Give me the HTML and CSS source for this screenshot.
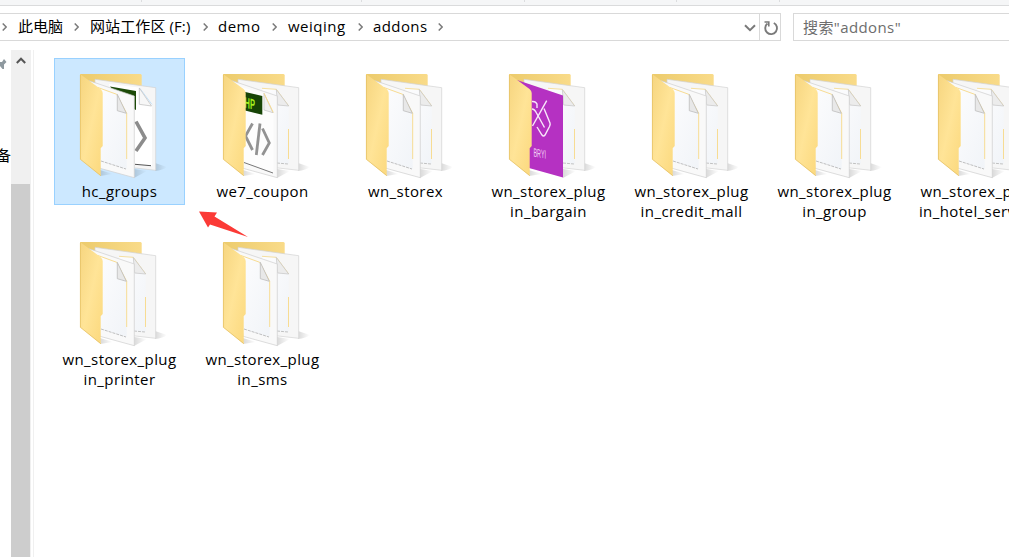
FILE: index.html
```html
<!DOCTYPE html>
<html lang="zh-CN">
<head>
    <meta charset="UTF-8">
    <title>addons</title>
    <link rel="stylesheet" href="styles.css">
</head>
<body>
    <svg class="sprite" width="0" height="0">
        <defs>
            <linearGradient id="gFlap" x1="0" y1="0" x2="1" y2="1">
                <stop offset="0" stop-color="#f6d57f"/>
                <stop offset="0.5" stop-color="#ffe497"/>
                <stop offset="1" stop-color="#fbd87c"/>
            </linearGradient>
            <linearGradient id="gBack" x1="0" y1="0" x2="1" y2="0">
                <stop offset="0" stop-color="#eccb6c"/>
                <stop offset="1" stop-color="#f9db89"/>
            </linearGradient>
            <linearGradient id="gSheet" x1="0" y1="0" x2="1" y2="1">
                <stop offset="0" stop-color="#fdfdfe"/>
                <stop offset="1" stop-color="#f1f4f8"/>
            </linearGradient>
            <linearGradient id="gShadow" x1="0" y1="0" x2="1" y2="0">
                <stop offset="0" stop-color="#000" stop-opacity="0.15"/>
                <stop offset="1" stop-color="#000" stop-opacity="0"/>
            </linearGradient>
        </defs>
        <symbol id="back" viewBox="0 0 97 114">
            <path d="M84 97 L96 101 Q92 104 84 105Z" fill="url(#gShadow)"/>
            <path d="M63 103 L76 105 L63 112Z" fill="url(#gShadow)"/>
            <path d="M29 104 L42 108 L29 110Z" fill="url(#gShadow)"/>
            <path d="M9 8 H69.500 Q70.700 8 70.700 9.500 V30 H9Z" fill="url(#gBack)"/>
            <path d="M24 13.300 L84.700 21.700 V104.300 L60 101.500 L24 90Z" fill="#f6f6f6" stroke="#d2d2d2" stroke-width="0.700"/>
        </symbol>
        <symbol id="backPage" viewBox="0 0 97 114">
            <path d="M48 22.300 L62.300 23.300 L74.700 40 V98 L60 97Z" fill="url(#gSheet)"/>
            <path d="M48 22.300 L62.300 23.300 L74.700 40" fill="none" stroke="#f5dfa0"/>
            <path d="M62.300 23.500 L63.700 39 L74.700 40Z" fill="#ececec" stroke="#c4c4c4" stroke-width="0.700"/>
            <path d="M74.500 63 V93" stroke="#f7dc93"/>
            <path d="M63 97 L74 98" stroke="#b5b5b5" stroke-width="0.800" stroke-dasharray="3 1"/>
        </symbol>
        <symbol id="front" viewBox="0 0 97 114">
            <path d="M18 14.700 L63.300 30 V111.700 L29 102.300Z" fill="#f9f9f9" stroke="#cfcfcf" stroke-width="0.700"/>
        </symbol>
        <symbol id="frontPage" viewBox="0 0 97 114">
            <path d="M24 20 L45.700 28.300 L55.700 47.300 V103 L29 95Z" fill="url(#gSheet)"/>
            <path d="M27 21.500 L45.700 28.300 L55.700 47.300 V93" fill="none" stroke="#f7dc93"/>
            <path d="M46.300 28.300 V44.700 L55.300 47.300Z" fill="#e8e8e8" stroke="#bdbdbd" stroke-width="0.800"/>
            <path d="M30 95 L55 103" stroke="#b0b0b0" stroke-width="0.800" stroke-dasharray="3 1"/>
        </symbol>
        <symbol id="flap" viewBox="0 0 97 114">
            <path d="M9 8 L29.500 23 Q31.700 25 31.700 27 V80 L29.700 82.300 V110 L9 93.300Z" fill="url(#gFlap)"/>
            <path d="M9.400 9 V93.300 L29.700 109.600" fill="none" stroke="#e3bd62" stroke-width="0.700"/>
        </symbol>
        <symbol id="folder" viewBox="0 0 97 114">
            <use href="#back"/><use href="#backPage"/><use href="#front"/><use href="#frontPage"/><use href="#flap"/>
        </symbol>
    </svg>

    <div class="ribbon">
        <i class="tick t1"></i><i class="tick t2"></i><i class="tick t3"></i><i class="tick t4"></i><i class="tick t5"></i>
    </div>

    <div class="toolbar">
        <div class="address">
            <div class="crumbs">
                <svg class="chev" viewBox="0 0 5 8"><path d="M0.700 0.500 L4.200 4 L0.700 7.500"/></svg>
                <span class="crumb c1">此电脑</span>
                <svg class="chev" viewBox="0 0 5 8"><path d="M0.700 0.500 L4.200 4 L0.700 7.500"/></svg>
                <span class="crumb c2">网站工作区 (F:)</span>
                <svg class="chev" viewBox="0 0 5 8"><path d="M0.700 0.500 L4.200 4 L0.700 7.500"/></svg>
                <span class="crumb c3">demo</span>
                <svg class="chev" viewBox="0 0 5 8"><path d="M0.700 0.500 L4.200 4 L0.700 7.500"/></svg>
                <span class="crumb c4">weiqing</span>
                <svg class="chev" viewBox="0 0 5 8"><path d="M0.700 0.500 L4.200 4 L0.700 7.500"/></svg>
                <span class="crumb c5">addons</span>
                <svg class="chev" viewBox="0 0 5 8"><path d="M0.700 0.500 L4.200 4 L0.700 7.500"/></svg>
            </div>
            <svg class="drop" viewBox="0 0 12 8"><path d="M1 1.200 L6 6.200 L11 1.200"/></svg>
            <div class="refresh">
                <svg viewBox="0 0 16 16" width="16" height="16">
                    <path d="M10.800 3 A5.900 5.900 0 1 1 4.500 3.600" fill="none" stroke="#7a7a7a" stroke-width="1.900"/>
                    <path d="M1.500 2 H5.800 V6.500" fill="none" stroke="#7a7a7a" stroke-width="1.600"/>
                </svg>
            </div>
        </div>
        <div class="search">搜索"addons"</div>
    </div>

    <div class="main">
        <div class="nav">
            <svg class="pin" viewBox="0 0 7 14"><path d="M0 4 L2 4 L4 1 L6.500 4 L4 6.500 L4 11 L2.500 11 L0 8Z" fill="#8e999f"/></svg>
            <div class="nav-text">备</div>
        </div>
        <div class="scrollbar">
            <svg class="up" viewBox="0 0 10 7"><path d="M0.800 6 L5 1.700 L9.200 6"/></svg>
            <div class="thumb"></div>
        </div>
        <div class="files">
            <div class="item selected">
                <svg class="icon" viewBox="0 0 97 114">
                    <use href="#back"/>
                    <path d="M38 18 L68 21.500 L81 39 V100 L60 98Z" fill="#fff"/>
                    <path d="M39 20.500 L65 25 V44 L52 38Z" fill="#1c4a08"/>
                    <path d="M69 22.500 L81 38.500" stroke="#c6e2f8"/>
                    <path d="M68.300 22 V38.300 L80.500 40Z" fill="#f7f7f7" stroke="#c4c4c4" stroke-width="0.800"/>
                    <path d="M65 55.500 L74 72 L65 85" fill="none" stroke="#8c8c8c" stroke-width="3.600"/>
                    <path d="M64 98.300 L80 99.700" stroke="#555"/>
                    <use href="#front"/><use href="#frontPage"/><use href="#flap"/>
                </svg>
                <div class="name">hc_groups</div>
            </div>
            <div class="item">
                <svg class="icon" viewBox="0 0 97 114">
                    <use href="#back"/><use href="#backPage"/><use href="#front"/>
                    <path d="M24 20 L50 27.500 L59.500 46 V107 L29 96Z" fill="#fdfdfd"/>
                    <path d="M27 25 L48.300 30 V48.700 L27 43.500Z" fill="#174406"/>
                    <text class="php" x="0" y="0" transform="matrix(0.500 0.120 0 1 30.500 41.500)">HP</text>
                    <path d="M50 27.300 V44 L59 46.700Z" fill="#f1f1f1" stroke="#c2c2c2" stroke-width="0.700"/>
                    <path d="M50 27.300 L59.300 46.500" stroke="#f7dc93"/>
                    <g fill="none" stroke="#929292" stroke-width="2.800">
                        <path d="M38.500 57.500 L31.500 70 L38.500 84"/>
                        <path d="M46 57.500 L42.300 89"/>
                        <path d="M48.500 62.500 L55.300 77 L48.500 89"/>
                    </g>
                    <path d="M30 96.500 L59 107" stroke="#777"/>
                    <use href="#flap"/>
                </svg>
                <div class="name">we7_coupon</div>
            </div>
            <div class="item">
                <svg class="icon" viewBox="0 0 97 114"><use href="#folder"/></svg>
                <div class="name">wn_storex</div>
            </div>
            <div class="item">
                <svg class="icon" viewBox="0 0 97 114">
                    <use href="#back"/><use href="#backPage"/>
                    <path d="M17 14 L63 29.500 V111.500 L29 102Z" fill="#b531c2"/>
                    <g fill="none" stroke="#f8e8fa" stroke-width="1.400">
                        <path d="M46.700 34.700 L32.500 60"/>
                        <path d="M32 35.500 Q35.500 35 37 38 V42"/>
                        <path d="M32 43 Q34.500 43 36.500 47 L44.500 61.500"/>
                        <path d="M44 42.500 L50 57 Q50.500 58.500 49.500 60.500 L45 69 Q43.500 71 42 69 L37 61"/>
                    </g>
                    <text class="brand" x="0" y="0" transform="matrix(0.450 0.080 0 1 33.500 90.500)">BRYI</text>
                    <use href="#flap"/>
                </svg>
                <div class="name">wn_storex_plug<br>in_bargain</div>
            </div>
            <div class="item">
                <svg class="icon" viewBox="0 0 97 114"><use href="#folder"/></svg>
                <div class="name">wn_storex_plug<br>in_credit_mall</div>
            </div>
            <div class="item">
                <svg class="icon" viewBox="0 0 97 114"><use href="#folder"/></svg>
                <div class="name">wn_storex_plug<br>in_group</div>
            </div>
            <div class="item">
                <svg class="icon" viewBox="0 0 97 114"><use href="#folder"/></svg>
                <div class="name">wn_storex_plug<br>in_hotel_service</div>
            </div>
            <div class="item">
                <svg class="icon" viewBox="0 0 97 114"><use href="#folder"/></svg>
                <div class="name">wn_storex_plug<br>in_printer</div>
            </div>
            <div class="item">
                <svg class="icon" viewBox="0 0 97 114"><use href="#folder"/></svg>
                <div class="name">wn_storex_plug<br>in_sms</div>
            </div>
        </div>
        <svg class="arrow" viewBox="0 0 50 28"><path d="M0 1.500 L18 2.500 L15.500 6.500 L49 27 L11 14.500 L9 17.500Z" fill="#fb3a36"/></svg>
    </div>
</body>
</html>
```
FILE: styles.css
```css
* {
    box-sizing: border-box;
}
body {
    margin: 0;
    width: 1009px;
    height: 557px;
    overflow: hidden;
    background: #fff;
    color: #000;
    font-family: "Open Sans", "Noto Sans CJK SC", sans-serif;
    font-size: 15px;
}
.sprite {
    position: absolute;
}
.ribbon {
    display: flex;
    height: 6px;
    background: #f5f6f7;
    border-bottom: 1px solid #dadbdc;
}
.tick {
    width: 1px;
    height: 2px;
    background: #dcdddf;
}
.t1 { margin-left: 141px; }
.t2 { margin-left: 219px; }
.t3 { margin-left: 162px; }
.t4 { margin-left: 151px; }
.t5 { margin-left: 102px; }
.toolbar {
    display: flex;
    gap: 12px;
    height: 35px;
    padding-top: 7px;
}
.address {
    display: flex;
    align-items: center;
    width: 781px;
    height: 28px;
    border: 1px solid #d9d9d9;
    border-left: none;
}
.crumbs {
    display: flex;
    align-items: center;
    gap: 11px;
    flex: 1;
    padding-left: 2px;
}
.crumb {
    height: 26px;
    line-height: 24px;
    white-space: nowrap;
}
.c1 { width: 45px; }
.c2 { width: 102px; letter-spacing: 0.1px; }
.c3 { width: 43px; margin-left: -1px; letter-spacing: 0.5px; }
.c4 { width: 59px; letter-spacing: 0.5px; }
.c5 { width: 54px; margin-left: -1px; letter-spacing: 0.4px; }
.chev {
    width: 5px;
    height: 8px;
    flex: none;
}
.chev path, .drop path, .up path {
    fill: none;
    stroke: #7a7a7a;
    stroke-width: 1.5;
}
.drop {
    width: 12px;
    height: 8px;
    margin: 2px 3px 0 0;
}
.drop path {
    stroke-width: 2;
}
.refresh {
    display: flex;
    align-items: center;
    justify-content: center;
    width: 21px;
    height: 26px;
    padding: 1px 0 0 2px;
    border-left: 1px solid #d9d9d9;
}
.search {
    flex: 1;
    height: 28px;
    padding-left: 9px;
    border: 1px solid #d9d9d9;
    border-right: none;
    line-height: 26px;
    letter-spacing: 0.4px;
    color: #6d6d6d;
}
.main {
    position: relative;
    display: flex;
    height: 516px;
}
.nav {
    flex: none;
    width: 11px;
    overflow: hidden;
    padding-top: 17px;
}
.pin {
    display: block;
    width: 7px;
    height: 14px;
}
.nav-text {
    width: 15px;
    margin: 73px 0 0 -4px;
    line-height: 20px;
}
.scrollbar {
    flex: none;
    width: 20px;
    margin-top: 9px;
    background: #f0f0f0;
    text-align: center;
    line-height: 0;
}
.up {
    width: 10px;
    height: 7px;
    margin-top: 7px;
}
.up path {
    stroke: #555;
    stroke-width: 2;
}
.thumb {
    width: 19px;
    height: 380px;
    margin-top: 120px;
    background: #cdcdcd;
}
.files {
    display: grid;
    grid-template-columns: repeat(7, 131px);
    grid-auto-rows: 168px;
    column-gap: 12px;
    flex: none;
    margin: 9px 0 0 2px;
    padding: 8px 0 0 20px;
    border-left: 1px solid #f0f0f0;
}
.item {
    height: 147px;
    padding-top: 7px;
    border: 1px solid transparent;
    text-align: center;
}
.selected {
    background: #cce8ff;
    border-color: #99d1ff;
}
.icon {
    display: block;
    width: 97px;
    height: 114px;
    margin: 0 auto;
}
.name {
    margin-top: 1px;
    line-height: 20px;
    letter-spacing: 0.42px;
    white-space: nowrap;
}
.php {
    font: bold 15px "Liberation Sans", sans-serif;
    fill: #a6f01c;
}
.brand {
    font: 12px "Liberation Sans", sans-serif;
    fill: #f3d5f6;
}
.arrow {
    position: absolute;
    left: 199px;
    top: 169px;
    width: 50px;
    height: 28px;
}
```
